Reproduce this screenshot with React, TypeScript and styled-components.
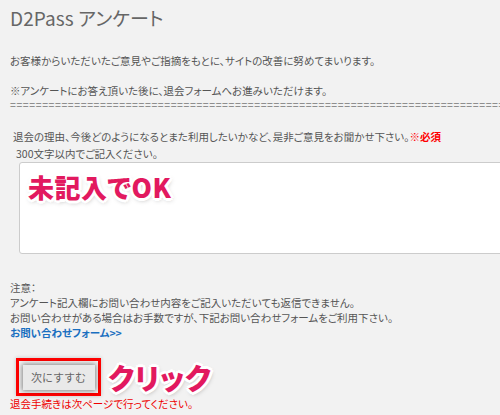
import React from 'react'
import styled, { createGlobalStyle } from 'styled-components'

const GlobalStyle = createGlobalStyle`
  html, body {
    margin: 0;
    padding: 0;
    background: #f2f2f2;
    overflow: hidden;
  }
  body {
    font-family: "Noto Sans CJK JP", "Noto Sans", sans-serif;
    font-feature-settings: "palt";
    color: #555;
  }
`

const Page = styled.div`
  width: 500px;
  height: 415px;
  padding: 6px 0 0 10px;
  box-sizing: border-box;
  overflow: hidden;
  font-size: 10.5px;
  line-height: 15px;
`

const Title = styled.h1`
  margin: 0;
  font-size: 19px;
  line-height: 24px;
  font-weight: 400;
  color: #666;
  letter-spacing: 0.1px;
`

const Text = styled.p<{ top?: number }>`
  margin: ${p => p.top ?? 0}px 0 0;
  white-space: nowrap;
`

const Separator = styled.div`
  margin-top: 1px;
  white-space: nowrap;
  line-height: 11px;
  letter-spacing: 0.6px;
  color: #777;
`

const Question = styled.div`
  margin-top: 19px;
  padding-left: 3px;
  white-space: nowrap;
`

const Required = styled.span`
  color: #f00;
  font-weight: 700;
`

const Limit = styled.div`
  margin-top: 2px;
  padding-left: 6px;
`

const AnswerBox = styled.div`
  position: relative;
  margin: 1px 0 0 9px;
  width: 500px;
  height: 90px;
  background: #fff;
  border: 1px solid #ccc;
  border-radius: 3px;
`

const Sticker = styled.span<{ size: number }>`
  font-size: ${p => p.size}px;
  font-weight: 900;
  color: #e2195f;
  letter-spacing: 0.5px;
  line-height: 1;
  white-space: nowrap;
  text-shadow:
    2px 0 0 #fff, -2px 0 0 #fff, 0 2px 0 #fff, 0 -2px 0 #fff,
    2px 2px 0 #fff, -2px -2px 0 #fff, 2px -2px 0 #fff, -2px 2px 0 #fff,
    3px 0 0 #fff, -3px 0 0 #fff, 0 3px 0 #fff, 0 -3px 0 #fff,
    1px 2px 5px rgba(0, 0, 0, 0.35);
`

const BoxSticker = styled(Sticker)`
  position: absolute;
  left: 8px;
  top: 11px;
`

const Notice = styled.div`
  margin-top: 26px;
`

const FormLink = styled.a`
  display: block;
  color: #1a6fc0;
  font-weight: 700;
  text-decoration: none;
`

const ActionRow = styled.div`
  display: flex;
  align-items: center;
  gap: 7px;
  margin-top: 18px;
  margin-left: 6px;
`

const Highlight = styled.div`
  display: flex;
  align-items: center;
  justify-content: center;
  width: 79px;
  height: 32px;
  border: 3px solid #f00;
  box-shadow: 0 0 4px rgba(0, 0, 0, 0.2);
`

const NextButton = styled.button`
  width: 72px;
  height: 25px;
  border: none;
  background: #e9e9e9;
  color: #666;
  font-family: inherit;
  font-size: 11px;
  padding: 0;
  box-shadow: 0 0 5px 1px rgba(0, 0, 0, 0.45);
`

const Warning = styled.div`
  margin-top: 1px;
  color: #e00;
  line-height: 13px;
`

export default function App() {
  return (
    <Page>
      <GlobalStyle />
      <Title>D2Pass アンケート</Title>
      <Text top={23}>お客様からいただいたご意見やご指摘をもとに、サイトの改善に努めてまいります。</Text>
      <Text top={15}>※アンケートにお答え頂いた後に、退会フォームへお進みいただけます。</Text>
      <Separator>{'='.repeat(110)}</Separator>
      <Question>
        退会の理由、今後どのようになるとまた利用したいかなど、是非ご意見をお聞かせ下さい。<Required>※必須</Required>
      </Question>
      <Limit>300文字以内でご記入ください。</Limit>
      <AnswerBox>
        <BoxSticker size={26}>未記入でOK</BoxSticker>
      </AnswerBox>
      <Notice>
        注意：
        <br />
        アンケート記入欄にお問い合わせ内容をご記入いただいても返信できません。
        <br />
        お問い合わせがある場合はお手数ですが、下記お問い合わせフォームをご利用下さい。
        <FormLink href="#">お問い合わせフォーム&gt;&gt;</FormLink>
      </Notice>
      <ActionRow>
        <Highlight>
          <NextButton>次にすすむ</NextButton>
        </Highlight>
        <Sticker size={29}>クリック</Sticker>
      </ActionRow>
      <Warning>退会手続きは次ページで行ってください。</Warning>
    </Page>
  )
}
